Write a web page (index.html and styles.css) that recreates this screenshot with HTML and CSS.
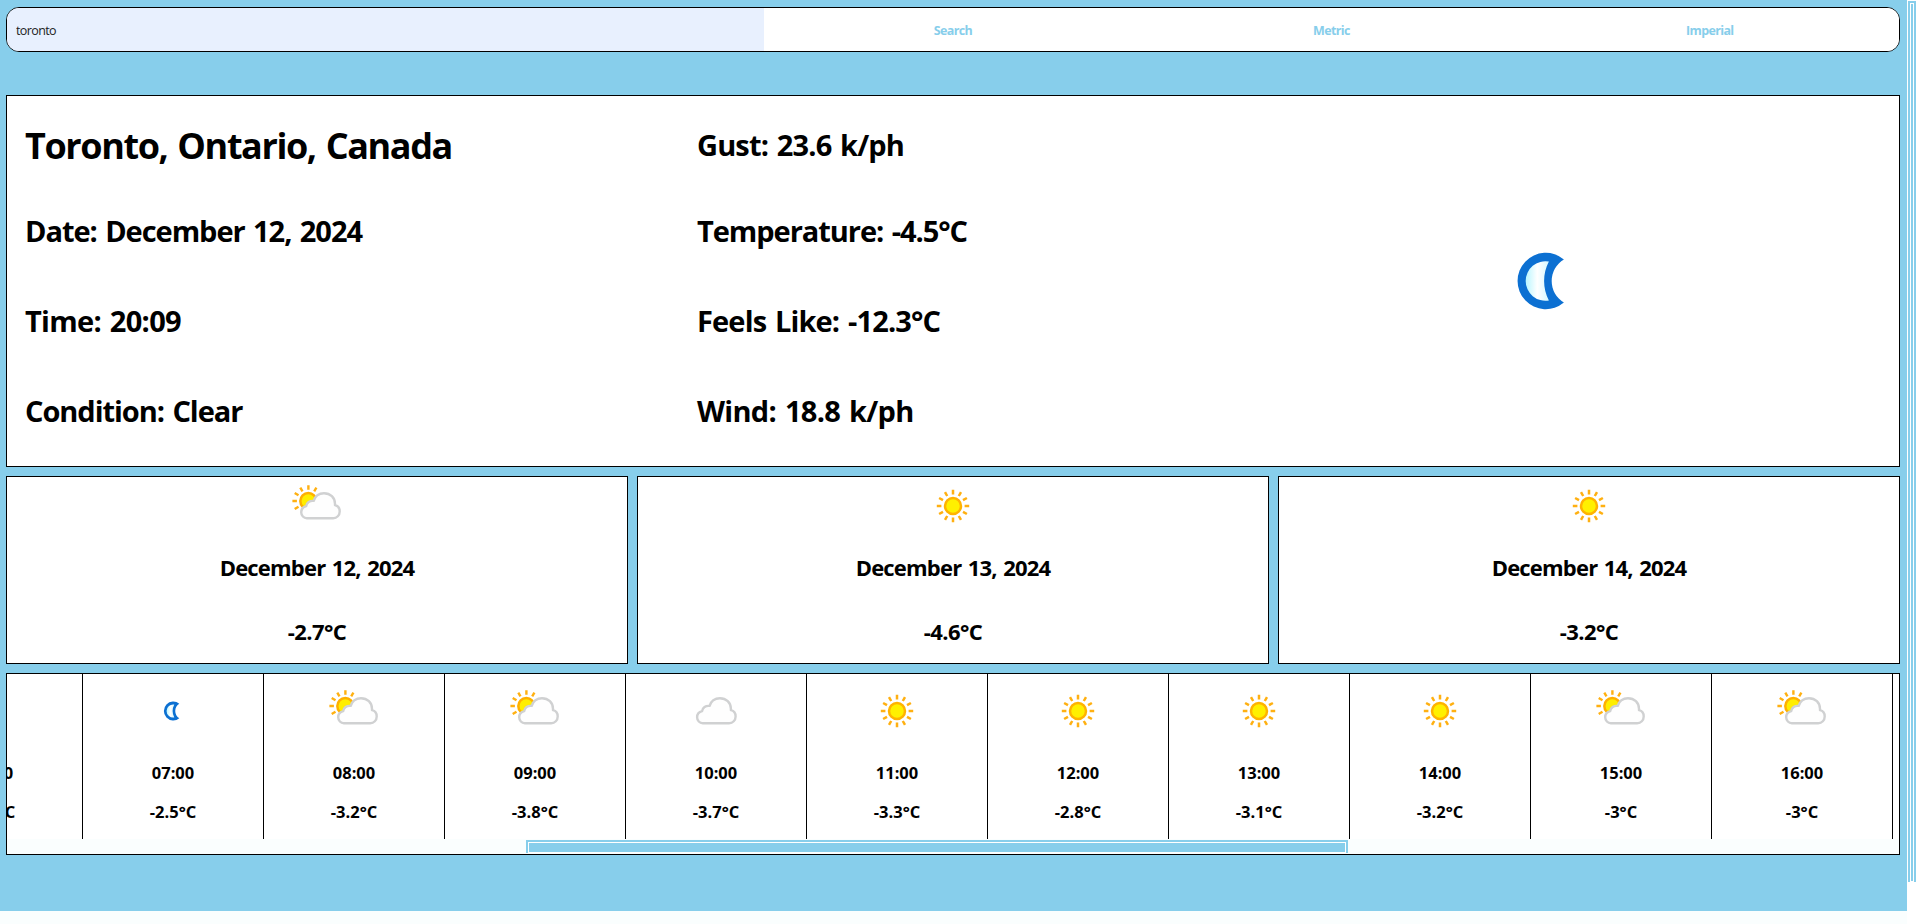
FILE: index.html
```html
<!DOCTYPE html>
<html lang="en">
<head>
<meta charset="utf-8">
<title>Weather</title>
<link rel="stylesheet" href="styles.css">
</head>
<body>
<svg class="defs" aria-hidden="true">
  <defs>
    <linearGradient id="moonFill" x1="0" x2="1" y1="0" y2="0"><stop offset="0" stop-color="#b8f6ff"/><stop offset=".5" stop-color="#fff"/><stop offset="1" stop-color="#d4f8ff"/></linearGradient>
    <symbol id="moon" viewBox="0 0 64 64">
      <path fill="#0c70d2" d="M38.3 24.8A9.4 9.4 0 1 0 38.3 39.2A8.4 8.4 0 0 1 38.3 24.8Z"/>
      <path fill="url(#moonFill)" d="M33.3 25.5A6.6 6.6 0 1 0 33.3 38.5A14 14 0 0 1 33.3 25.5Z"/>
    </symbol>
    <symbol id="sun" viewBox="0 0 64 64">
      <circle cx="32" cy="32" r="8" fill="#fff000" stroke="#ffb300" stroke-width="2.5"/>
      <path stroke="#ffb011" stroke-width="2.5" d="M32 15.8v4.6M32 43.6v4.6M15.8 32h4.6M43.6 32h4.6M24 18.1l2.2 3.9M40 45.9l-2.2-3.9M40 18.1l-2.2 3.9M24 45.9l2.2-3.9M18.1 24l3.9 2.2M45.9 40l-3.9-2.2M45.9 24l-3.9 2.2M18.1 40l3.9-2.2"/>
    </symbol>
    <symbol id="partly" viewBox="0 0 64 64">
      <circle cx="23.3" cy="27" r="8" fill="#ffee00" stroke="#ffb000" stroke-width="2.5"/>
      <path stroke="#ffb011" stroke-width="2.4" d="M23.4 11.3v4.5M7.4 27h4.5M15.3 13.6l2.2 3.7M31.4 13.6l-2.2 3.7M9.7 19l3.8 2.2M9.7 35l3.8-2.2"/>
      <use href="#cloudShape" x="-.5" y="0"/>
    </symbol>
    <symbol id="cloudy" viewBox="0 0 64 64"><use href="#cloudShape" x="-3.6" y="0"/></symbol>
    <path id="cloudShape" fill="#fefefe" stroke="#d0d1d2" stroke-width="2.4" stroke-linejoin="round" d="M22.3 44.2C19.3 44.2 16.7 41.6 16.7 38.3C16.7 35.2 18.8 32.9 21.7 32.2C22.1 28.7 25.3 26.4 29.2 26.9C30.4 22.3 34.5 19.2 39.5 19.2C45.8 19.2 50.5 23.7 50.5 29.8V31.2C53.3 31.8 55.2 34.4 55.2 37.4C55.2 41.2 52.4 44.2 48.7 44.2Z"/>
  </defs>
</svg>
<div class="window">
  <div class="view">
    <main class="page">
      <form class="search">
        <input class="query" type="text" value="toronto">
        <button class="action" type="button">Search</button>
        <button class="action" type="button">Metric</button>
        <button class="action" type="button">Imperial</button>
      </form>
      <section class="current">
        <div class="col place">
          <h1 class="city">Toronto, Ontario, Canada</h1>
          <h2 class="fact date">Date: December 12, 2024</h2>
          <h2 class="fact time">Time: 20:09</h2>
          <h2 class="fact condition">Condition: Clear</h2>
        </div>
        <div class="col readings">
          <h2 class="fact gust">Gust: 23.6 k/ph</h2>
          <h2 class="fact temp">Temperature: -4.5°C</h2>
          <h2 class="fact feels">Feels Like: -12.3°C</h2>
          <h2 class="fact wind">Wind: 18.8 k/ph</h2>
        </div>
        <div class="symbol"><svg class="big-icon"><use href="#moon"/></svg></div>
      </section>
      <section class="days">
        <article class="day"><svg class="icon"><use href="#partly"/></svg><h3 class="day-name">December 12, 2024</h3><h3 class="day-temp">-2.7°C</h3></article>
        <article class="day"><svg class="icon"><use href="#sun"/></svg><h3 class="day-name">December 13, 2024</h3><h3 class="day-temp">-4.6°C</h3></article>
        <article class="day"><svg class="icon"><use href="#sun"/></svg><h3 class="day-name">December 14, 2024</h3><h3 class="day-temp">-3.2°C</h3></article>
      </section>
      <section class="hourly">
        <div class="hours">
          <div class="hour"><svg class="icon"><use href="#moon"/></svg><h4>06:00</h4><h4>-2.5°C</h4></div>
          <div class="hour"><svg class="icon"><use href="#moon"/></svg><h4>07:00</h4><h4>-2.5°C</h4></div>
          <div class="hour"><svg class="icon"><use href="#partly"/></svg><h4>08:00</h4><h4>-3.2°C</h4></div>
          <div class="hour"><svg class="icon"><use href="#partly"/></svg><h4>09:00</h4><h4>-3.8°C</h4></div>
          <div class="hour"><svg class="icon"><use href="#cloudy"/></svg><h4>10:00</h4><h4>-3.7°C</h4></div>
          <div class="hour"><svg class="icon"><use href="#sun"/></svg><h4>11:00</h4><h4>-3.3°C</h4></div>
          <div class="hour"><svg class="icon"><use href="#sun"/></svg><h4>12:00</h4><h4>-2.8°C</h4></div>
          <div class="hour"><svg class="icon"><use href="#sun"/></svg><h4>13:00</h4><h4>-3.1°C</h4></div>
          <div class="hour"><svg class="icon"><use href="#sun"/></svg><h4>14:00</h4><h4>-3.2°C</h4></div>
          <div class="hour"><svg class="icon"><use href="#partly"/></svg><h4>15:00</h4><h4>-3°C</h4></div>
          <div class="hour"><svg class="icon"><use href="#partly"/></svg><h4>16:00</h4><h4>-3°C</h4></div>
        </div>
        <div class="track-x"><div class="thumb thumb-x"></div></div>
      </section>
    </main>
    <div class="track-bottom"></div>
  </div>
  <div class="track-y"><div class="thumb thumb-y"></div></div>
</div>
</body>
</html>
```
FILE: styles.css
```css
* { box-sizing: border-box; }
body { margin: 0; background: #fff; color: #000; font-family: "Open Sans", "Noto Sans", sans-serif; overflow: hidden; }
h1, h2, h3, h4 { margin: 0; white-space: nowrap; font-weight: 700; }
.defs { display: block; width: 0; height: 0; }
.window { display: flex; width: 1916px; height: 924px; }
.view { display: flex; flex-direction: column; width: 1907px; }
.page { height: 911px; padding: 7px 7px 0 6px; background: #87ceeb; }
.track-bottom { height: 13px; background: #fafefe; }
.track-y { width: 9px; padding: 1px 0 0 1px; background: #fff; }

/* Scrollbar thumbs: blue with a thin white inset ring */
.thumb { padding: 2px; background: #87ceeb; }
.thumb::before { content: ""; display: block; height: 100%; border: 1px solid #fff; }
.thumb-y { width: 8px; height: 881px; }
.thumb-x { width: 822px; height: 13px; }

.search { display: flex; height: 45px; border: 1px solid #000; border-radius: 13px; overflow: hidden; background: #fff; }
.query { width: 40%; padding: 2px 9px 0; border: 0; background: #e8f0fe; color: #222; font: 12.5px "Open Sans", sans-serif; letter-spacing: -0.6px; }
.action { width: 20%; padding: 2px 0 0; border: 0; background: #fff; color: #87ceeb; font: 700 12.5px "Open Sans", sans-serif; letter-spacing: -0.65px; }

.current { display: flex; height: 372px; margin-top: 43px; border: 1px solid #000; background: #fff; }
.col { display: flex; flex-direction: column; }
.place { width: 690px; padding: 25px 0 0 18px; }
.readings { width: 493px; padding-top: 29px; }
.city { font-size: 36px; line-height: 50px; letter-spacing: -1.4px; word-spacing: 2px; }
.fact { font-size: 29px; line-height: 40px; letter-spacing: -1.05px; word-spacing: 2px; }
.date { margin-top: 40px; }
.time, .condition, .feels, .wind { margin-top: 50px; }
.time, .wind { letter-spacing: -0.7px; }
.gust, .feels { letter-spacing: -0.85px; }
.temp { margin-top: 46px; }
.symbol { display: flex; flex: 1; align-items: center; justify-content: center; }
.big-icon { width: 192px; height: 192px; }

.days { display: flex; gap: 9px; margin-top: 9px; }
.day { display: flex; flex-direction: column; align-items: center; width: 622px; height: 188px; border: 1px solid #000; background: #fff; }
.day:nth-child(2) { width: 632px; }
.icon { flex: none; width: 64px; height: 64px; }
.day .icon { margin-top: -3px; }
.day h3 { font-size: 22px; line-height: 30px; letter-spacing: -0.6px; }
.day .day-name { margin-top: 14px; letter-spacing: -0.8px; word-spacing: 1.5px; }
.day-temp { margin-top: 34px; }

.hourly { height: 182px; margin-top: 9px; border: 1px solid #000; background: #fff; overflow: hidden; }
.hours { display: flex; height: 165px; margin-left: -105px; }
.hour { display: flex; flex: none; flex-direction: column; align-items: center; width: 181px; padding-top: 5px; border-right: 1px solid #000; }
.hour h4 { font-size: 16.5px; line-height: 22px; }
.hour .icon + h4 { margin-top: 19px; }
.hour h4 + h4 { margin-top: 17px; }
.track-x { height: 15px; padding: 1px 0 0 519px; background: #fafefe; }
```
